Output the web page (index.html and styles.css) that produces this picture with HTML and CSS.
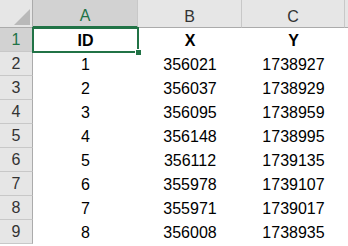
FILE: index.html
```html
<!DOCTYPE html>
<html lang="en">
<head>
  <meta charset="UTF-8">
  <title>Sheet</title>
  <link rel="stylesheet" href="styles.css">
</head>
<body>
  <div class="sheet">
    <div class="corner"><span class="tri"></span></div>
    <div class="col-head sel">A</div>
    <div class="col-head">B</div>
    <div class="col-head">C</div>
    <div class="col-head rest"></div>

    <div class="row-head sel">1</div>
    <div class="cell bold active">ID<span class="handle"></span></div>
    <div class="cell bold">X</div>
    <div class="cell bold">Y</div>
    <div class="cell"></div>

    <div class="row-head">2</div><div class="cell">1</div><div class="cell">356021</div><div class="cell">1738927</div><div class="cell"></div>
    <div class="row-head">3</div><div class="cell">2</div><div class="cell">356037</div><div class="cell">1738929</div><div class="cell"></div>
    <div class="row-head">4</div><div class="cell">3</div><div class="cell">356095</div><div class="cell">1738959</div><div class="cell"></div>
    <div class="row-head">5</div><div class="cell">4</div><div class="cell">356148</div><div class="cell">1738995</div><div class="cell"></div>
    <div class="row-head">6</div><div class="cell">5</div><div class="cell">356112</div><div class="cell">1739135</div><div class="cell"></div>
    <div class="row-head">7</div><div class="cell">6</div><div class="cell">355978</div><div class="cell">1739107</div><div class="cell"></div>
    <div class="row-head">8</div><div class="cell">7</div><div class="cell">355971</div><div class="cell">1739017</div><div class="cell"></div>
    <div class="row-head">9</div><div class="cell">8</div><div class="cell">356008</div><div class="cell">1738935</div><div class="cell"></div>
  </div>
</body>
</html>
```

FILE: styles.css
```css
body {
  margin: 0;
  background: #fff;
  font-family: "Liberation Sans", Arial, sans-serif;
  font-size: 16px;
  overflow: hidden;
}

.sheet {
  display: grid;
  grid-template-columns: 33px 105px 104px 103px 1fr;
  grid-template-rows: 28px repeat(9, 24px);
  width: 348px;
}

.corner {
  position: relative;
  background: #e6e6e6;
  border-right: 1px solid #ababab;
  border-bottom: 1px solid #ababab;
}

.corner .tri {
  position: absolute;
  right: 2px;
  bottom: 2px;
  width: 0;
  height: 0;
  border-left: 16px solid transparent;
  border-bottom: 16px solid #b9b9b9;
}

.col-head {
  display: flex;
  align-items: flex-end;
  justify-content: center;
  line-height: 18px;
  padding-bottom: 1px;
  background: #e6e6e6;
  color: #333;
  border-right: 1px solid #c8c8c8;
  border-bottom: 1px solid #ababab;
}

.col-head.rest {
  border-right: none;
}

.row-head {
  display: flex;
  align-items: flex-end;
  justify-content: center;
  line-height: 18px;
  padding-bottom: 2px;
  background: #e6e6e6;
  color: #333;
  border-right: 1px solid #ababab;
  border-bottom: 1px solid #c8c8c8;
}

.sel {
  background: #d2d2d2;
  color: #217346;
}

.col-head.sel {
  border-bottom: 2px solid #217346;
}

.cell {
  display: flex;
  align-items: flex-end;
  justify-content: center;
  line-height: 18px;
  padding-bottom: 2px;
  color: #000;
}

.bold {
  font-weight: bold;
}

.active {
  position: relative;
  outline: 2px solid #217346;
  outline-offset: -1px;
}

.handle {
  position: absolute;
  right: -4px;
  bottom: -4px;
  width: 5px;
  height: 5px;
  background: #217346;
  border: 1px solid #fff;
}
```
